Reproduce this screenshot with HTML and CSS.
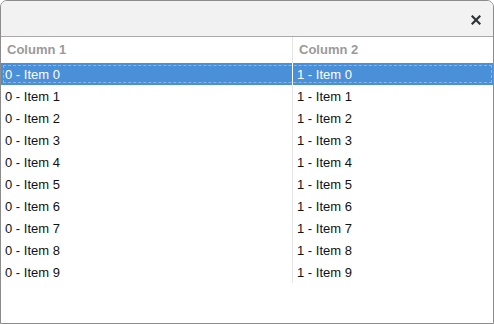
FILE: index.html
```html
<!DOCTYPE html>
<html lang="en">
<head>
    <meta charset="UTF-8">
    <title>Tree View</title>
    <link rel="stylesheet" href="styles.css">
</head>
<body>

    <div class="window">
        <div class="titlebar">
            <svg class="close" width="10" height="10" viewBox="0 0 10 10">
                <path d="M1.5 1.5 L8.5 8.5 M8.5 1.5 L1.5 8.5" stroke="#2e3436" stroke-width="2.2" stroke-linecap="square"/>
            </svg>
        </div>

        <div class="list">
            <div class="row header">
                <div class="cell">Column 1</div>
                <div class="cell">Column 2</div>
            </div>
            <div class="row selected">
                <div class="cell">0 - Item 0</div>
                <div class="cell">1 - Item 0</div>
            </div>
            <div class="row"><div class="cell">0 - Item 1</div><div class="cell">1 - Item 1</div></div>
            <div class="row"><div class="cell">0 - Item 2</div><div class="cell">1 - Item 2</div></div>
            <div class="row"><div class="cell">0 - Item 3</div><div class="cell">1 - Item 3</div></div>
            <div class="row"><div class="cell">0 - Item 4</div><div class="cell">1 - Item 4</div></div>
            <div class="row"><div class="cell">0 - Item 5</div><div class="cell">1 - Item 5</div></div>
            <div class="row"><div class="cell">0 - Item 6</div><div class="cell">1 - Item 6</div></div>
            <div class="row"><div class="cell">0 - Item 7</div><div class="cell">1 - Item 7</div></div>
            <div class="row"><div class="cell">0 - Item 8</div><div class="cell">1 - Item 8</div></div>
            <div class="row"><div class="cell">0 - Item 9</div><div class="cell">1 - Item 9</div></div>
        </div>
    </div>

</body>
</html>
```

FILE: styles.css
```css
body {
    margin: 0;
    font-family: "Liberation Sans", Arial, sans-serif;
    font-size: 13px;
    background-color: #fff;
}

.window {
    width: 494px;
    height: 324px;
    box-sizing: border-box;
    border: 1px solid #8c8c8c;
    border-radius: 7px 7px 0 0;
    background-color: #fff;
    overflow: hidden;
}

.titlebar {
    height: 35px;
    background-color: #f2f2f2;
    border-bottom: 1px solid #a9a9a9;
    display: flex;
    justify-content: flex-end;
    align-items: center;
    padding-right: 12px;
}

.close {
    margin-top: 2px;
}

.list {
    display: flex;
    flex-direction: column;
}

.row {
    display: grid;
    grid-template-columns: 292px 199px;
    height: 22px;
    color: #111;
}

.cell {
    display: flex;
    align-items: center;
    padding-left: 4px;
    border-right: 1px solid #e4e4e4;
}

.cell:last-child {
    border-right: none;
}

.header {
    height: 26px;
    color: #9a9a9a;
    font-weight: bold;
}

.header .cell {
    padding-left: 6px;
    padding-bottom: 2px;
}

.selected {
    background-color: #4a90d9;
    color: #fff;
    position: relative;
}

.selected .cell {
    border-right-color: #ffffff;
}

.selected::after {
    content: "";
    position: absolute;
    left: 2px;
    right: 1px;
    top: 2px;
    bottom: 2px;
    border: 1px dashed rgba(255, 255, 255, 0.35);
}
```
